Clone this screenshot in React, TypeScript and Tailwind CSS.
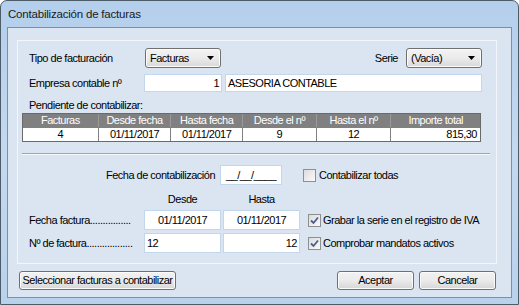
import React from "react";

const font = { fontFamily: '"Liberation Sans", Arial, sans-serif' };

const Combo = ({ value }: { value: string }) => (
  <div className="flex h-[20px] w-[76px] items-center justify-between rounded-[3px] border border-[#707070] bg-gradient-to-b from-[#f3f3f3] via-[#ebebeb] to-[#d8d8d8] pl-[4px] pr-[6px] shadow-[inset_0_0_0_1px_#fcfcfc]">
    <span>{value}</span>
    <svg width="7" height="4" viewBox="0 0 7 4">
      <path d="M0 0 H7 L3.5 4 Z" fill="#000" />
    </svg>
  </div>
);

const Input = ({ value, w, h = "h-[20px]", align = "text-left" }: { value?: string; w: string; h?: string; align?: string }) => (
  <div className={`${w} ${h} ${align} flex items-center border border-[#c3d7ec] bg-white px-[2px]`}>
    <span className="w-full">{value}</span>
  </div>
);

const Check = ({ checked }: { checked?: boolean }) => (
  <div className="flex h-[13px] w-[13px] shrink-0 items-center justify-center border border-[#8e8f8f] bg-gradient-to-br from-[#dcdcdc] to-[#fafafa]">
    {checked && (
      <svg width="11" height="11" viewBox="0 0 11 11">
        <path d="M2 5.5 L4.5 8 L9 2.5" fill="none" stroke="#4a5f8c" strokeWidth="1.8" />
      </svg>
    )}
  </div>
);

const Button = ({ label, w }: { label: string; w: string }) => (
  <div className={`${w} flex h-[19px] items-center justify-center rounded-[3px] border border-[#707070] bg-gradient-to-b from-[#f2f2f2] via-[#ebebeb] to-[#d6d6d6] shadow-[inset_0_0_0_1px_#fbfbfb]`}>
    {label}
  </div>
);

const cols = [
  { h: "Facturas", v: "4", w: "w-[75px]", a: "text-center" },
  { h: "Desde fecha", v: "01/11/2017", w: "w-[73px]", a: "text-center" },
  { h: "Hasta fecha", v: "01/11/2017", w: "w-[72px]", a: "text-center" },
  { h: "Desde el nº", v: "9", w: "w-[74px]", a: "text-center" },
  { h: "Hasta el nº", v: "12", w: "w-[75px]", a: "text-center" },
  { h: "Importe total", v: "815,30", w: "w-[90px]", a: "text-right" },
];

export default function App() {
  return (
    <div
      className="flex h-[305px] w-[519px] flex-col whitespace-nowrap rounded-t-[7px] border border-[#4e5b69] bg-gradient-to-b from-[#b4cfec] via-[#c3d9f0] to-[#b9d2ec] px-[6px] text-[11px] leading-[13px] tracking-[-0.5px] text-black"
      style={font}
    >
      <div className="flex h-[26px] items-center pl-[1px] text-[11.5px] tracking-[-0.2px] text-[#1a1a1a]">
        Contabilización de facturas
      </div>
      <div className="flex h-[271px] flex-col border border-[#7d8fa6] bg-[#dbe5f1]">
        <div className="ml-[9px] mt-[12px] flex h-[224px] w-[480px] flex-col border border-[#f3f7fb] pr-[14px]">
          <div className="mt-[7px] flex h-[20px] items-center">
            <span className="w-[127px] pl-[11px]">Tipo de facturación</span>
            <Combo value="Facturas" />
            <span className="ml-auto mr-[8px]">Serie</span>
            <Combo value="(Vacía)" />
          </div>
          <div className="mt-[6px] flex h-[18px] items-center">
            <span className="w-[126px] pl-[11px]">Empresa contable nº</span>
            <Input value="1" w="w-[78px]" h="h-[18px]" align="text-right" />
            <div className="ml-[3px]">
              <Input value="ASESORIA CONTABLE" w="w-[257px]" h="h-[18px]" />
            </div>
          </div>
          <div className="mt-[7px] pl-[11px]">Pendiente de contabilizar:</div>
          <div className="ml-[4px] mt-[1px] flex w-[459px] flex-col border border-[#6a6a6a]">
            <div className="flex h-[13px] bg-[#808080] text-white">
              {cols.map((c, i) => (
                <div key={c.h} className={`${c.w} ${i > 0 ? "border-l border-[#9a9a9a]" : ""} text-center leading-[13px]`}>
                  {c.h}
                </div>
              ))}
            </div>
            <div className="flex h-[14px] bg-white">
              {cols.map((c, i) => (
                <div key={c.h} className={`${c.w} ${i > 0 ? "border-l border-[#808080]" : ""} ${c.a} border-t border-[#808080] px-[3px] leading-[13px]`}>
                  {c.v}
                </div>
              ))}
            </div>
          </div>
          <div className="ml-[4px] mt-[11px] h-[2px] w-[468px] border-t border-b border-t-[#a0a7b0] border-b-[#f5f8fb]" />
          <div className="mt-[10px] flex h-[20px] items-center">
            <span className="w-[197px] text-right">Fecha de contabilización</span>
            <div className="ml-[5px]">
              <Input value="__/__/____" w="w-[62px]" align="text-center" />
            </div>
            <div className="ml-[21px]">
              <Check />
            </div>
            <span className="ml-[3px]">Contabilizar todas</span>
          </div>
          <div className="mt-[8px] flex h-[13px] items-center">
            <span className="w-[126px]" />
            <span className="w-[77px] text-center">Desde</span>
            <span className="ml-[2px] w-[77px] text-center">Hasta</span>
          </div>
          <div className="mt-[4px] flex h-[20px] items-center">
            <span className="w-[126px] pl-[11px]">Fecha factura................</span>
            <Input value="01/11/2017" w="w-[77px]" align="text-center" />
            <div className="ml-[2px]">
              <Input value="01/11/2017" w="w-[77px]" align="text-center" />
            </div>
            <div className="ml-[8px]">
              <Check checked />
            </div>
            <span className="ml-[2px]">Grabar la serie en el registro de IVA</span>
          </div>
          <div className="mt-[3px] flex h-[20px] items-center">
            <span className="w-[126px] pl-[11px]">Nº de factura..................</span>
            <Input value="12" w="w-[77px]" />
            <div className="ml-[2px]">
              <Input value="12" w="w-[77px]" align="text-right" />
            </div>
            <div className="ml-[8px]">
              <Check checked />
            </div>
            <span className="ml-[2px]">Comprobar mandatos activos</span>
          </div>
        </div>
        <div className="mt-[7px] flex items-center pl-[11px] pr-[15px]">
          <Button label="Seleccionar facturas a contabilizar" w="w-[157px]" />
          <div className="ml-auto flex gap-[5px]">
            <Button label="Aceptar" w="w-[77px]" />
            <Button label="Cancelar" w="w-[77px]" />
          </div>
        </div>
      </div>
    </div>
  );
}
